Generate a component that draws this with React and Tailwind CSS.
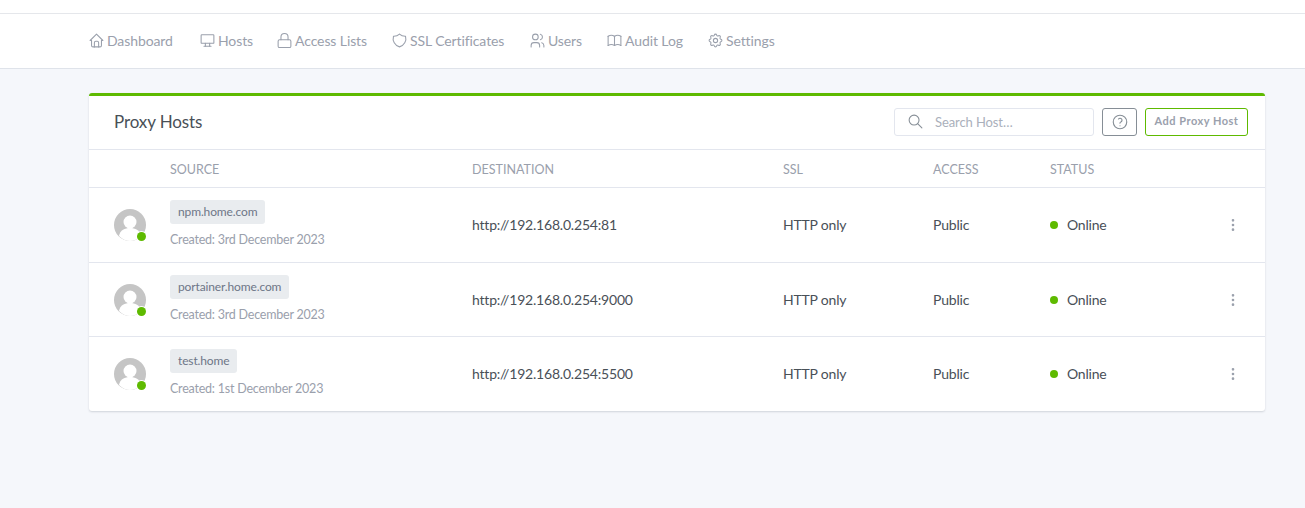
import { Lock } from 'lucide-react';
import { TbHome, TbDeviceDesktop, TbShield, TbUsers, TbBook, TbSettings, TbSearch, TbHelp, TbDotsVertical } from 'react-icons/tb';

const navItems = [
  { label: 'Dashboard', icon: TbHome, width: 'w-[111px]' },
  { label: 'Hosts', icon: TbDeviceDesktop, width: 'w-[77px]' },
  { label: 'Access Lists', icon: Lock, width: 'w-[115px]' },
  { label: 'SSL Certificates', icon: TbShield, width: 'w-[138px]' },
  { label: 'Users', icon: TbUsers, width: 'w-[77px]' },
  { label: 'Audit Log', icon: TbBook, width: 'w-[101px]' },
  { label: 'Settings', icon: TbSettings, width: 'w-[80px]' },
];

const hosts = [
  { domain: 'npm.home.com', created: 'Created: 3rd December 2023', dest: 'http://192.168.0.254:81', height: 'h-[75px] pb-px' },
  { domain: 'portainer.home.com', created: 'Created: 3rd December 2023', dest: 'http://192.168.0.254:9000', height: 'h-[74px]' },
  { domain: 'test.home', created: 'Created: 1st December 2023', dest: 'http://192.168.0.254:5500', height: 'h-[75px] pb-px' },
];

const cols = 'grid grid-cols-[81px_302px_311px_150px_117px_175px_40px] items-center';

function Avatar() {
  return (
    <div className="relative w-8 h-8">
      <svg viewBox="0 0 32 32" className="w-8 h-8">
        <circle cx="16" cy="16" r="16" fill="#c5c5c5" />
        <circle cx="16" cy="13" r="6.5" fill="#fff" />
        <path d="M5 27c1-6 6-8 11-8s10 2 11 8c-3 3-7 5-11 5s-8-2-11-5z" fill="#fff" />
      </svg>
      <span className="absolute right-0 bottom-0 w-[9px] h-[9px] rounded-full bg-[#5eba00] ring-1 ring-white" />
    </div>
  );
}

function HostRow({ host }) {
  return (
    <div className={`${cols} ${host.height} border-t border-[#e3e6ee] text-[14px] tracking-[-0.2px] text-[#495057]`}>
      <div className="pl-[25px]"><Avatar /></div>
      <div className="flex flex-col items-start">
        <span className="h-6 px-2 rounded-[3px] bg-[#e9ecef] text-[12px] tracking-[-0.13px] leading-6 text-[#6e7687]">{host.domain}</span>
        <span className="mt-[6px] text-[12.5px] tracking-[-0.22px] leading-5 text-[#9aa0ac]">{host.created}</span>
      </div>
      <div>{host.dest}</div>
      <div>HTTP only</div>
      <div>Public</div>
      <div className="flex items-center">
        <span className="w-2 h-2 rounded-full bg-[#5eba00] mr-[9px]" />
        Online
      </div>
      <div><TbDotsVertical className="w-4 h-4 text-[#9aa0ac]" /></div>
    </div>
  );
}

export default function App() {
  return (
    <div className="min-h-[508px] bg-[#f5f7fb] font-['Lato','Liberation_Sans',sans-serif] tracking-[-0.1px]">
      <div className="h-[14px] bg-white border-b border-[#e5e7eb]" />
      <nav className="h-[55px] bg-white border-b border-[#dfe3ea] pl-[88px] pb-[2px] flex items-center text-[14px] text-[#9aa0ac]">
        {navItems.map((item) => (
          <a key={item.label} className={`flex items-center gap-[2px] ${item.width}`}>
            <item.icon className="w-[17px] h-[17px] shrink-0" strokeWidth={1.5} />
            <span>{item.label}</span>
          </a>
        ))}
      </nav>
      <main className="pl-[89px] pr-10 pt-6">
        <div className="bg-white rounded-[3px] border-t-[3px] border-[#5eba00] shadow-[0_1px_2px_rgba(60,70,90,0.2)]">
          <div className="h-[53px] flex items-center pl-[25px] pr-[17px] pb-[2px]">
            <h3 className="text-[17px] text-[#495057]">Proxy Hosts</h3>
            <div className="ml-auto flex items-center">
              <div className="w-[200px] h-7 pt-[2px] border border-[#e3e6ee] rounded-[3px] flex items-center pl-3 text-[13px] text-[#aab0bb]">
                <TbSearch className="w-[17px] h-[17px] -mt-[2px] text-[#868e96]" strokeWidth={1.5} />
                <span className="ml-[11px]">Search Host…</span>
              </div>
              <button className="ml-2 w-[35px] h-7 border border-[#868e96] rounded-[3px] flex items-center justify-center text-[#868e96]">
                <TbHelp className="w-[18px] h-[18px]" strokeWidth={1.5} />
              </button>
              <button className="ml-2 w-[103px] h-7 pb-px border border-[#5eba00] rounded-[3px] text-[11px] font-bold tracking-[0.5px] text-[#9aa0ac]">
                Add Proxy Host
              </button>
            </div>
          </div>
          <div className={`${cols} h-[38px] pt-[3px] border-t border-[#e3e6ee] text-[12.5px] tracking-normal uppercase text-[#9aa0ac]`}>
            <div />
            <div>Source</div>
            <div>Destination</div>
            <div>SSL</div>
            <div>Access</div>
            <div>Status</div>
            <div />
          </div>
          {hosts.map((host) => (
            <HostRow key={host.domain} host={host} />
          ))}
        </div>
      </main>
    </div>
  );
}
